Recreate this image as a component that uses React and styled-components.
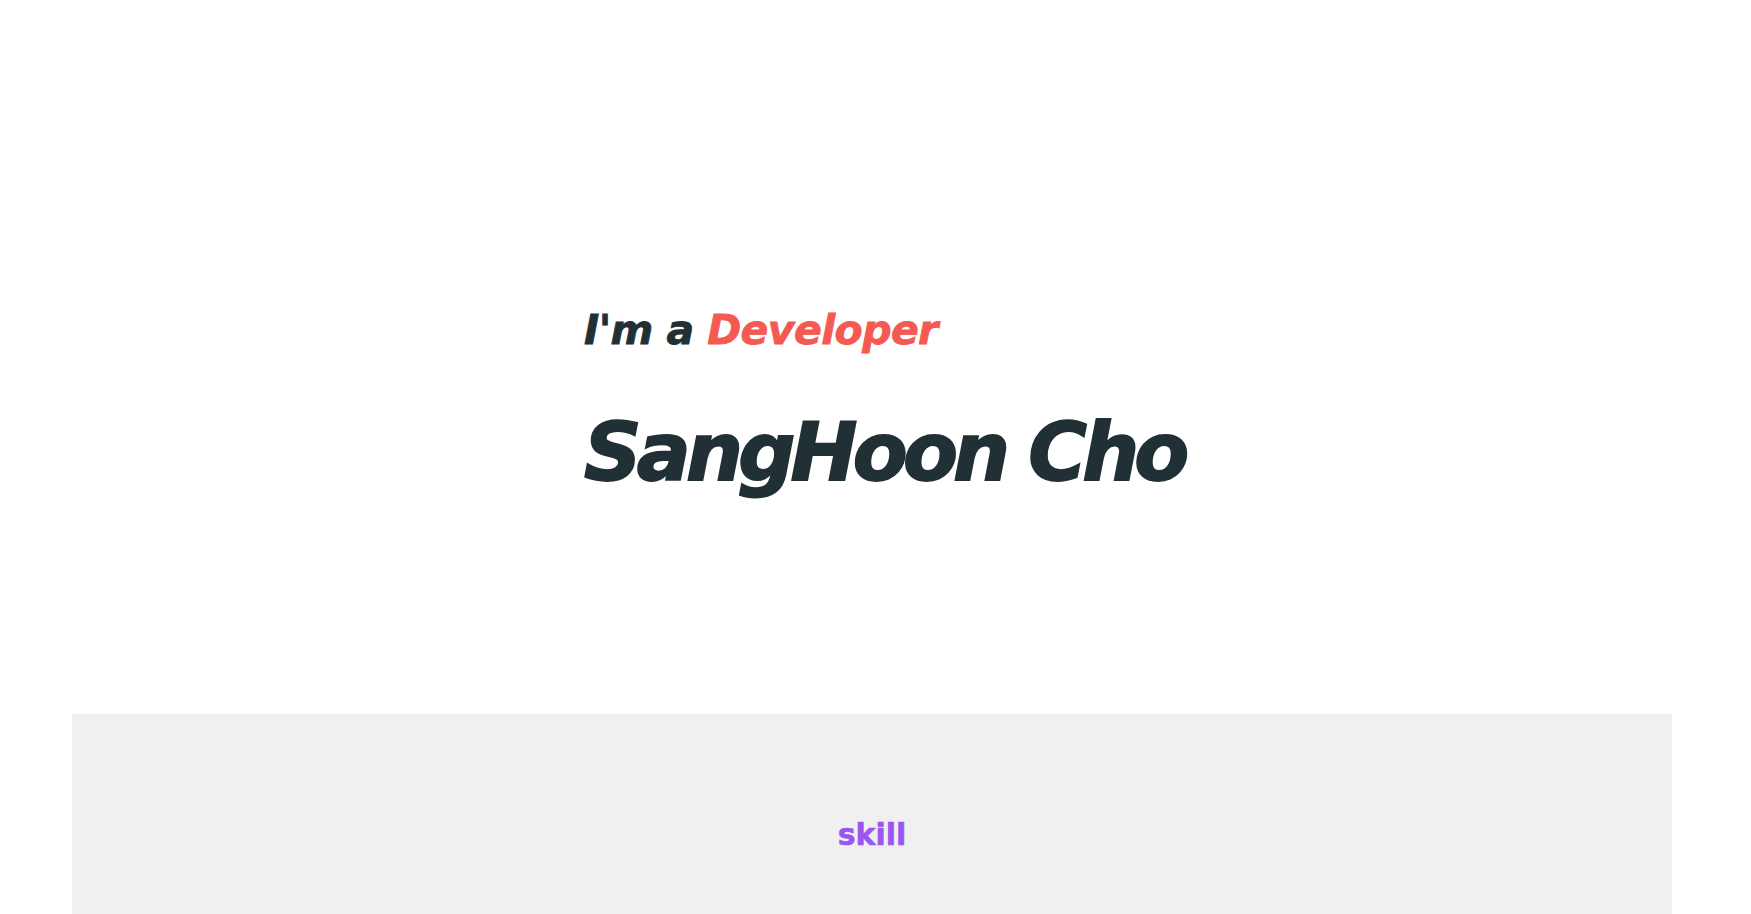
import styled, { createGlobalStyle } from "styled-components"

const GlobalStyle = createGlobalStyle`
  html, body {
    margin: 0;
    padding: 0;
    background: #ffffff;
    overflow: hidden;
  }
  body {
    font-family: "DejaVu Sans", "Liberation Sans", sans-serif;
  }
`

const Page = styled.div`
  height: 914px;
  display: flex;
  flex-direction: column;
`

const Hero = styled.section`
  height: 714px;
  box-sizing: border-box;
  padding: 310px 0 0 584px;
`

const heading = `
  margin: 0;
  font-family: "DejaVu Sans", "Liberation Sans", sans-serif;
  font-style: italic;
  font-weight: 700;
  line-height: 1;
  color: #213035;
  white-space: nowrap;
`

const Intro = styled.h2`
  ${heading}
  font-size: 41px;
  letter-spacing: -0.6px;
  -webkit-text-stroke: 0.8px currentColor;
`

const Accent = styled.span`
  color: #f45952;
`

const Name = styled.h1`
  ${heading}
  margin-top: 62px;
  font-size: 80px;
  letter-spacing: -4.8px;
  -webkit-text-stroke: 1.8px currentColor;
`

const SkillPanel = styled.section`
  width: 1600px;
  margin: 0 0 0 72px;
  flex: 1;
  background: #f0f0f0;
  display: flex;
  justify-content: center;
  padding-top: 106px;
  box-sizing: border-box;
`

const SkillTitle = styled.h3`
  margin: 0;
  font-family: "DejaVu Sans", "Noto Sans", sans-serif;
  font-weight: 700;
  font-size: 30px;
  line-height: 1;
  letter-spacing: 0;
  color: #9b55f2;
  -webkit-text-stroke: 0.6px currentColor;
`

export default function App() {
    return (
        <Page>
            <GlobalStyle />
            <Hero>
                <Intro>
                    I'm a <Accent>Developer</Accent>
                </Intro>
                <Name>SangHoon Cho</Name>
            </Hero>
            <SkillPanel>
                <SkillTitle>skill</SkillTitle>
            </SkillPanel>
        </Page>
    )
}
